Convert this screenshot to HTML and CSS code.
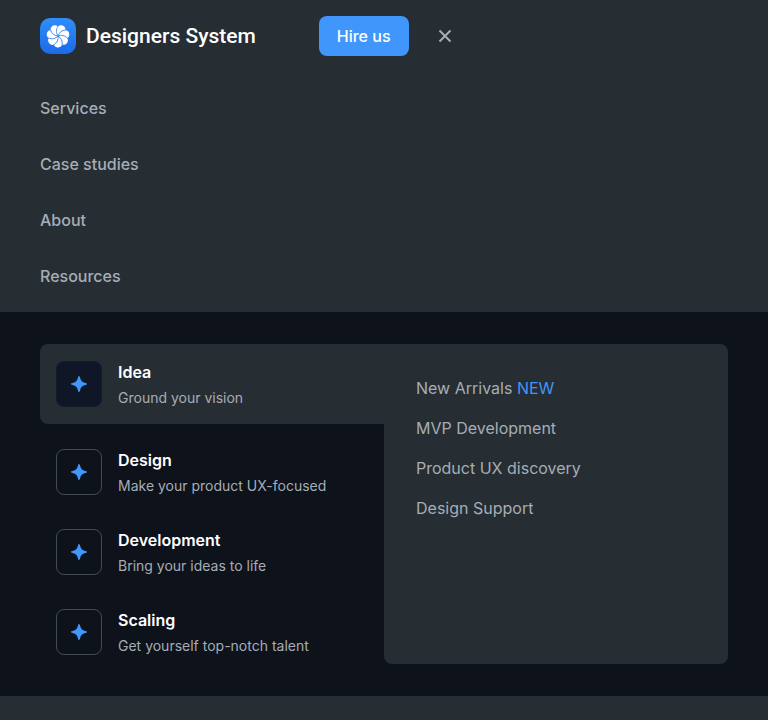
FILE: index.html
```html
<!DOCTYPE html>
<html lang="en">
<head>
<meta charset="utf-8">
<meta name="viewport" content="width=device-width, initial-scale=1">
<title>Designers System</title>
<link rel="stylesheet" href="styles.css">
</head>
<body>
<svg class="sprite" aria-hidden="true">
  <symbol id="spark" viewBox="0 0 16 16"><path fill="currentColor" d="M8 0C8.600 0 8.800.8 9 1.600C9.800 4.900 11.100 6.200 14.400 7C15.200 7.200 16 7.400 16 8S15.200 8.800 14.400 9C11.100 9.800 9.800 11.100 9 14.400C8.800 15.200 8.600 16 8 16S7.200 15.200 7 14.400C6.200 11.100 4.900 9.800 1.600 9C.8 8.800 0 8.600 0 8S.8 7.200 1.600 7C4.900 6.200 6.200 4.900 7 1.600C7.200.8 7.400 0 8 0Z"/></symbol>
</svg>
<header class="header">
  <div class="bar">
    <a class="brand" href="#">
      <svg class="logo" viewBox="0 0 36 36" aria-hidden="true">
        <defs>
          <linearGradient id="tile" x1="0" y1="0" x2="0" y2="1"><stop offset="0" stop-color="#318dfa"/><stop offset="1" stop-color="#1c6ae8"/></linearGradient>
          <circle id="petal" cx="21" cy="11.700" r="4.500"/>
          <path id="seam" d="M18 18C16 15.200 15.800 11.600 18.200 8"/>
        </defs>
        <rect width="36" height="36" rx="10" fill="url(#tile)"/>
        <g fill="#fff">
          <circle cx="18" cy="18" r="8"/>
          <use href="#petal"/>
          <use href="#petal" transform="rotate(51.430 18 18)"/>
          <use href="#petal" transform="rotate(102.860 18 18)"/>
          <use href="#petal" transform="rotate(154.290 18 18)"/>
          <use href="#petal" transform="rotate(205.710 18 18)"/>
          <use href="#petal" transform="rotate(257.140 18 18)"/>
          <use href="#petal" transform="rotate(308.570 18 18)"/>
        </g>
        <g fill="none" stroke="#2a7ff2" stroke-width="0.800">
          <use href="#seam"/>
          <use href="#seam" transform="rotate(51.430 18 18)"/>
          <use href="#seam" transform="rotate(102.860 18 18)"/>
          <use href="#seam" transform="rotate(154.290 18 18)"/>
          <use href="#seam" transform="rotate(205.710 18 18)"/>
          <use href="#seam" transform="rotate(257.140 18 18)"/>
          <use href="#seam" transform="rotate(308.570 18 18)"/>
        </g>
      </svg>
      <span>Designers System</span>
    </a>
    <button class="hire" type="button">Hire us</button>
    <button class="close" type="button" aria-label="Close menu">
      <svg viewBox="0 0 14 14" aria-hidden="true"><path d="M1.500 1.500L12.500 12.500M12.500 1.500L1.500 12.500"/></svg>
    </button>
  </div>
  <nav class="nav">
    <a href="#">Services</a>
    <a href="#">Case studies</a>
    <a href="#">About</a>
    <a href="#">Resources</a>
  </nav>
</header>
<main class="mega">
  <div class="stages">
    <a class="stage active" href="#">
      <span class="tile"><svg><use href="#spark"/></svg></span>
      <span class="copy"><strong>Idea</strong><small>Ground your vision</small></span>
    </a>
    <div class="rest">
      <a class="stage" href="#">
        <span class="tile"><svg><use href="#spark"/></svg></span>
        <span class="copy"><strong>Design</strong><small>Make your product UX-focused</small></span>
      </a>
      <a class="stage" href="#">
        <span class="tile"><svg><use href="#spark"/></svg></span>
        <span class="copy"><strong>Development</strong><small>Bring your ideas to life</small></span>
      </a>
      <a class="stage" href="#">
        <span class="tile"><svg><use href="#spark"/></svg></span>
        <span class="copy"><strong>Scaling</strong><small>Get yourself top-notch talent</small></span>
      </a>
    </div>
  </div>
  <div class="panel">
    <a href="#">New Arrivals <span class="new">NEW</span></a>
    <a href="#">MVP Development</a>
    <a href="#">Product UX discovery</a>
    <a href="#">Design Support</a>
  </div>
</main>
</body>
</html>
```
FILE: styles.css
```css
:root {
  --surface: #262d33;
  --dark: #0d121b;
  --blue: #4096fa;
  --muted: #a7adb5;
}
* { box-sizing: border-box; }
body {
  margin: 0;
  background: var(--surface);
  color: var(--muted);
  font: 16px/24px Inter, sans-serif;
}
a { color: inherit; text-decoration: none; }
button { border: 0; padding: 0; font: inherit; cursor: pointer; }
.sprite { display: none; }
.bar {
  display: flex;
  align-items: center;
  height: 72px;
  padding: 0 40px;
}
.brand {
  display: flex;
  align-items: center;
  gap: 10px;
  margin-right: 63px;
  color: #fff;
  font: 500 21px/28px Roboto, sans-serif;
  white-space: nowrap;
}
.logo { width: 36px; height: 36px; }
.hire {
  height: 40px;
  padding: 0 18px;
  border-radius: 8px;
  background: var(--blue);
  color: #fff;
  font-weight: 500;
}
.close {
  display: grid;
  place-items: center;
  width: 40px;
  height: 40px;
  margin-left: 16px;
  background: none;
  color: var(--muted);
}
.close svg { width: 14px; height: 14px; fill: none; stroke: currentColor; stroke-width: 2; }
.nav {
  display: flex;
  flex-direction: column;
  align-items: flex-start;
  gap: 32px;
  padding: 24px 40px;
  font-weight: 500;
}
.mega {
  display: grid;
  grid-template-columns: 1fr 1fr;
  padding: 32px 40px;
  background: var(--dark);
}
.stage { display: flex; align-items: center; gap: 16px; }
.active {
  padding: 16px;
  border-radius: 8px 0 0 8px;
  background: var(--surface);
}
.rest {
  display: flex;
  flex-direction: column;
  gap: 32px;
  padding: 24px 16px 8px;
}
.tile {
  display: grid;
  place-items: center;
  flex: none;
  width: 46px;
  height: 46px;
  border: 1px solid #444b52;
  border-radius: 8px;
  color: var(--blue);
}
.active .tile { border-color: #151b2a; background: #0f1626; }
.tile svg { width: 16px; height: 16px; }
.copy { display: flex; flex-direction: column; gap: 4px; }
.copy strong { color: #fff; font-weight: 600; }
.copy small { font-size: 14px; line-height: 20px; }
.panel {
  display: flex;
  flex-direction: column;
  align-items: flex-start;
  gap: 16px;
  padding: 32px;
  border-radius: 0 8px 8px 8px;
  background: var(--surface);
}
.new { color: var(--blue); }
```
